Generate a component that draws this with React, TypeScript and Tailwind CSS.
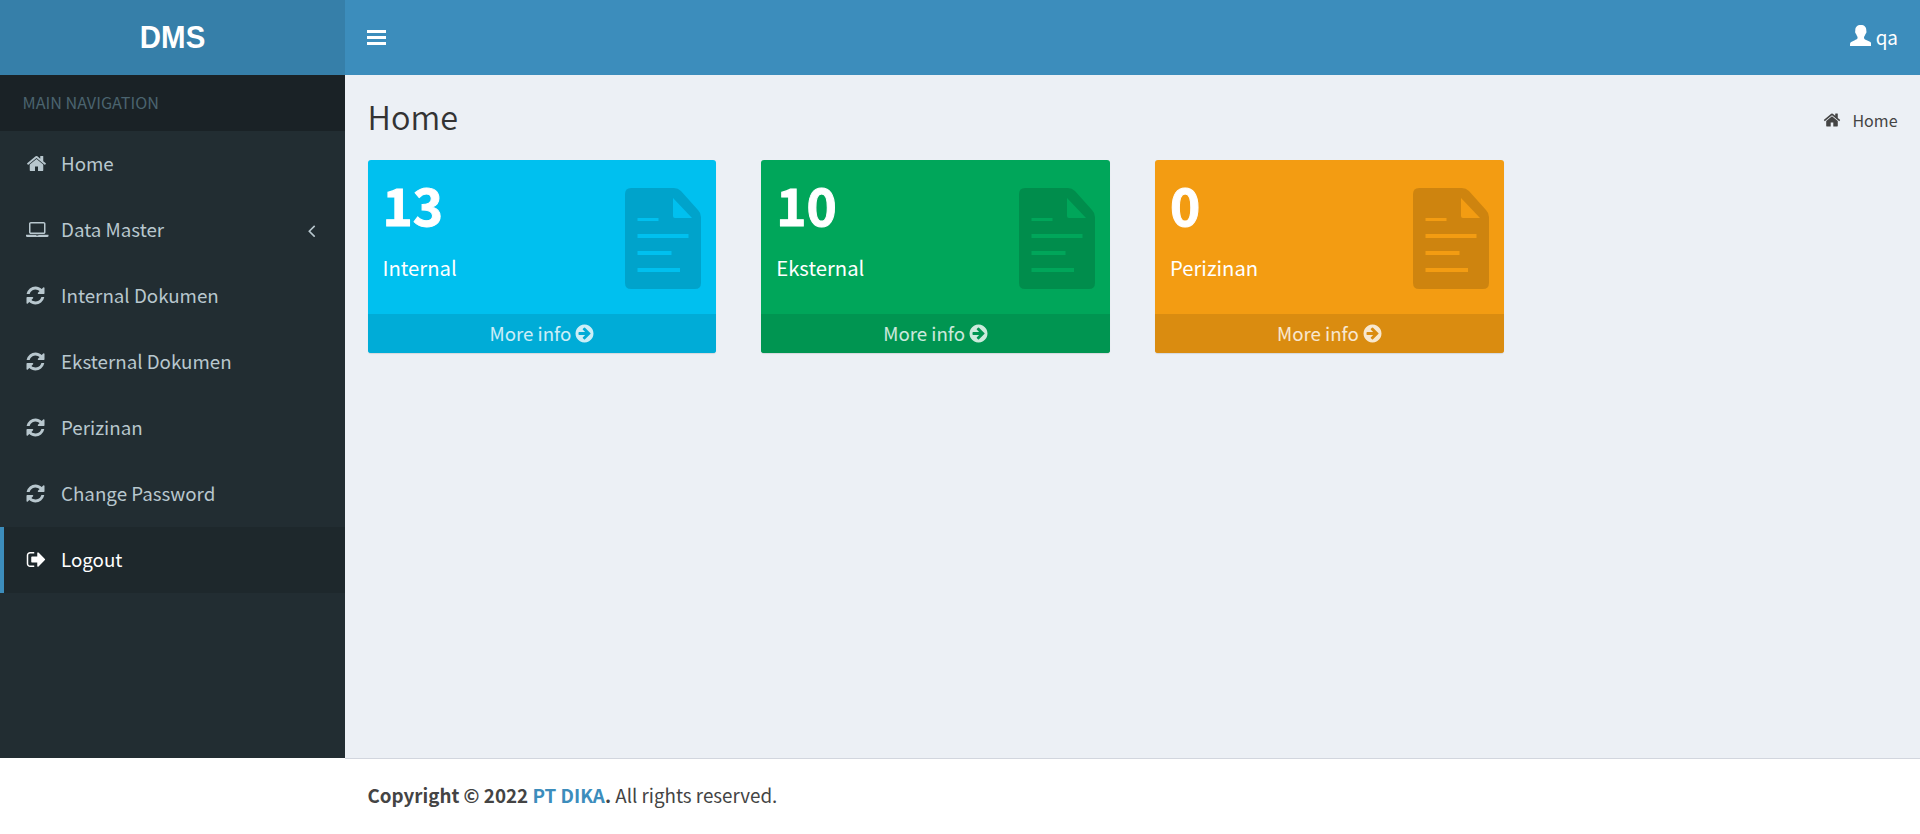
import type { ReactNode } from "react";

const HOME =
  "M1472 992v480q0 26-19 45t-45 19h-384v-384h-256v384h-384q-26 0-45-19t-19-45v-480q0-1 .5-3t.5-3l575-474 575 474q1 2 1 6zm223-69l-62 74q-8 9-21 11h-3q-13 0-21-7l-692-577-692 577q-12 8-24 7-13-2-21-11l-62-74q-8-10-7-23.5t11-21.5l719-599q32-26 76-26t76 26l244 204v-195q0-14 9-23t23-9h192q14 0 23 9t9 23v408l219 182q10 8 11 21.5t-7 23.5z";
const REFRESH =
  "M1639 1056q0 5-1 7-64 268-268 434.5t-478 166.5q-146 0-282.5-55t-243.5-157l-129 129q-19 19-45 19t-45-19-19-45v-448q0-26 19-45t45-19h448q26 0 45 19t19 45-19 45l-137 137q71 66 161 102t187 36q134 0 250-65t186-179q11-17 53-117 8-23 30-23h192q13 0 22.5 9.5t9.5 22.5zm25-800v448q0 26-19 45t-45 19h-448q-26 0-45-19t-19-45 19-45l138-138q-148-137-349-137-134 0-250 65t-186 179q-11 17-53 117-8 23-30 23h-199q-13 0-22.5-9.5t-9.5-22.5v-7q65-268 270-434.5t480-166.5q146 0 284 55.5t245 156.5l130-129q19-19 45-19t45 19 19 45z";
const SIGN_OUT =
  "M704 1440q0 4 1 20t.5 26.5-3 23.5-10 19.5-20.5 6.5h-320q-119 0-203.5-84.5t-84.5-203.5v-704q0-119 84.5-203.5t203.5-84.5h320q13 0 22.5 9.5t9.5 22.5q0 4 1 20t.5 26.5-3 23.5-10 19.5-20.5 6.5h-320q-66 0-113 47t-47 113v704q0 66 47 113t113 47h312l11.5 1 11.5 3 8 5.5 7 9 2 13.5zm928-544q0 26-19 45l-544 544q-19 19-45 19t-45-19-19-45v-288h-448q-26 0-45-19t-19-45v-384q0-26 19-45t45-19h448v-288q0-26 19-45t45-19 45 19l544 544q19 19 19 45z";
const LAPTOP =
  "M416 1280q-66 0-113-47t-47-113v-704q0-66 47-113t113-47h1088q66 0 113 47t47 113v704q0 66-47 113t-113 47h-1088zm-32-864v704q0 13 9.5 22.5t22.5 9.5h1088q13 0 22.5-9.5t9.5-22.5v-704q0-13-9.5-22.5t-22.5-9.5h-1088q-13 0-22.5 9.5t-9.5 22.5zm1376 928h160v96q0 40-47 68t-113 28h-1600q-66 0-113-28t-47-68v-96h1760zm-720 96q16 0 16-16t-16-16h-160q-16 0-16 16t16 16h160z";
const ANGLE_LEFT =
  "M1203 544q0 13-10 23l-393 393 393 393q10 10 10 23t-10 23l-50 50q-10 10-23 10t-23-10l-466-466q-10-10-10-23t10-23l466-466q10-10 23-10t23 10l50 50q10 10 10 23z";
const ARROW_CIRCLE =
  "M1413 896q0-27-18-45l-91-91-362-362q-18-18-45-18t-45 18l-91 91q-18 18-18 45t18 45l189 189h-502q-26 0-45 19t-19 45v128q0 26 19 45t45 19h502l-189 189q-18 18-18 45t18 45l91 91q18 18 45 18t45-18l362-362 91-91q18-18 18-45zm251 0q0 209-103 385.5t-279.5 279.5-385.5 103-385.5-103-279.5-279.5-103-385.5 103-385.5 279.5-279.5 385.5-103 385.5 103 279.5 279.5 103 385.5z";

function Icon({ d, className, viewBox = "0 0 1792 1792" }: { d: string; className: string; viewBox?: string }) {
  return (
    <svg viewBox={viewBox} fill="currentColor" className={className} aria-hidden="true">
      <path d={d} />
    </svg>
  );
}

function NavItem({ icon, label, active, trailing }: { icon: ReactNode; label: string; active?: boolean; trailing?: ReactNode }) {
  return (
    <li>
      <a
        href="#"
        className={
          active
            ? "flex h-[66px] items-center border-l-4 border-[#3c8dbc] bg-[#1e282c] pr-[23px] pl-[22px] text-white"
            : "flex h-[66px] items-center border-l-4 border-transparent pr-[23px] pl-[22px] text-[#b8c7ce]"
        }
      >
        <span className="flex w-[35px] items-center pb-px">{icon}</span>
        <span className="flex-1 pb-[2px] text-[18.75px]">{label}</span>
        {trailing}
      </a>
    </li>
  );
}

function StatBox({ value, label, tone, footer }: { value: string; label: string; tone: string; footer: string }) {
  return (
    <div className="w-[393.75px] px-[22.5px]">
      <div className={`overflow-hidden rounded-[3px] text-white shadow-[0_1px_1px_rgba(0,0,0,0.1)] ${tone}`}>
        <div className="flex h-[154px] justify-between pr-[15px] pl-[15px]">
          <div>
            <div className="mt-[11px] text-[51.3px] leading-[66px] font-bold [-webkit-text-stroke:1px_white]">{value}</div>
            <p className="mt-[16px] text-[20.25px] leading-[30px]">{label}</p>
          </div>
          <svg viewBox="0 0 76 101" className="mt-[28px] h-[101px] w-[76px] fill-black/15" aria-hidden="true">
            <path
              fillRule="evenodd"
              d="M6 0H49Q53 0 56 3L73 22Q76 25 76 29V95Q76 101 70 101H6Q0 101 0 95V6Q0 0 6 0ZM48 10V28Q48 30 50 30H67ZM12.500 30V33H33.500V30ZM12.500 46V50H63.500V46ZM12.500 63V67H46.500V63ZM12.500 80V84H55V80Z"
            />
          </svg>
        </div>
        <a href="#" className={`flex h-[39px] items-center justify-center pl-px text-[18.7px] text-white/80 ${footer}`}>
          More info
          <Icon d={ARROW_CIRCLE} className="ml-[3px] size-[21px]" />
        </a>
      </div>
    </div>
  );
}

export default function App() {
  const refresh = <Icon d={REFRESH} className="-ml-[0.75px] size-[21px]" />;
  return (
    <div className="flex h-[834px] w-[1920px] flex-col overflow-hidden bg-white font-['Noto_Sans_CJK_SC',sans-serif] text-[#333]">
      <header className="flex h-[75px] shrink-0 text-white">
        <a
          href="#"
          className="flex w-[345px] items-center justify-center bg-[#367fa9] pb-px font-['Liberation_Sans',sans-serif] text-[32px] font-bold"
        >
          <span className="scale-x-[0.92]">DMS</span>
        </a>
        <nav className="flex flex-1 items-center justify-between bg-[#3c8dbc] pr-[22px] pl-[22px]">
          <svg viewBox="0 0 19 15" className="h-[15px] w-[19px] fill-white" aria-label="Toggle navigation">
            <path d="M0 0H19V3H0ZM0 6H19V9H0ZM0 12H19V15H0Z" />
          </svg>
          <a href="#" className="flex items-center text-[18.9px]">
            <svg viewBox="0 0 21 21" className="mr-[5px] mb-[4px] size-[21px] fill-white" aria-hidden="true">
              <path d="M10.800 0C14.500 0 16.300 2 16.300 5.200C16.300 6 16.600 6.500 16.400 7.400C16.200 8.300 15.700 8.400 15.400 9.300C15 10.700 14 11.600 14 12.600C14 14.400 15 14.500 16.700 15.200L20 16.800C21 17.300 21.200 18 21.200 21H0C0 18 .2 17.500 1.200 17L4.800 15.200C6.600 14.400 7.600 14.300 7.600 12.600C7.600 11.600 6.600 10.700 6.200 9.300C5.900 8.400 5.400 8.300 5.200 7.400C5 6.500 5.300 6 5.300 5.200C5.300 2 7.100 0 10.800 0Z" />
            </svg>
            qa
          </a>
        </nav>
      </header>

      <div className="flex h-[683px] shrink-0">
        <aside className="w-[345px] bg-[#222d32]">
          <div className="flex h-[56px] items-center bg-[#1a2226] pb-[2px] pl-[22.5px] text-[16.2px] text-[#4b646f]">MAIN NAVIGATION</div>
          <ul>
            <NavItem label="Home" icon={<Icon d={HOME} className="size-[21px]" />} />
            <NavItem
              label="Data Master"
              icon={<Icon d={LAPTOP} viewBox="0 0 1920 1792" className="h-[21px] w-[22.5px]" />}
              trailing={<Icon d={ANGLE_LEFT} className="size-[21px]" />}
            />
            <NavItem label="Internal Dokumen" icon={refresh} />
            <NavItem label="Eksternal Dokumen" icon={refresh} />
            <NavItem label="Perizinan" icon={refresh} />
            <NavItem label="Change Password" icon={refresh} />
            <NavItem label="Logout" active icon={<Icon d={SIGN_OUT} className="-ml-[0.5px] size-[21px]" />} />
          </ul>
        </aside>
        <main className="flex-1 bg-[#ecf0f5]">
          <section className="flex h-[85px] items-center justify-between px-[22.5px]">
            <h1 className="pb-[3px] text-[32.4px] leading-[36px] font-[350]">Home</h1>
            <div className="mt-[5px] flex items-center gap-[11px] text-[16px] leading-[24px] text-[#444]">
              <Icon d={HOME} className="size-[18px]" />
              Home
            </div>
          </section>
          <section className="flex">
            <StatBox value="13" label="Internal" tone="bg-[#00c0ef]" footer="bg-[#00acd7]" />
            <StatBox value="10" label="Eksternal" tone="bg-[#00a65a]" footer="bg-[#009551]" />
            <StatBox value="0" label="Perizinan" tone="bg-[#f39c12]" footer="bg-[#da8c10]" />
          </section>
        </main>
      </div>

      <footer className="ml-[345px] flex flex-1 items-center border-t border-[#d2d6de] pb-[2px] pl-[22.5px] text-[18.8px] text-[#444]">
        <p>
          <strong>
            Copyright © 2022 <a href="#" className="text-[#3c8dbc]">PT DIKA</a>.
          </strong>{" "}
          All rights reserved.
        </p>
      </footer>
    </div>
  );
}
